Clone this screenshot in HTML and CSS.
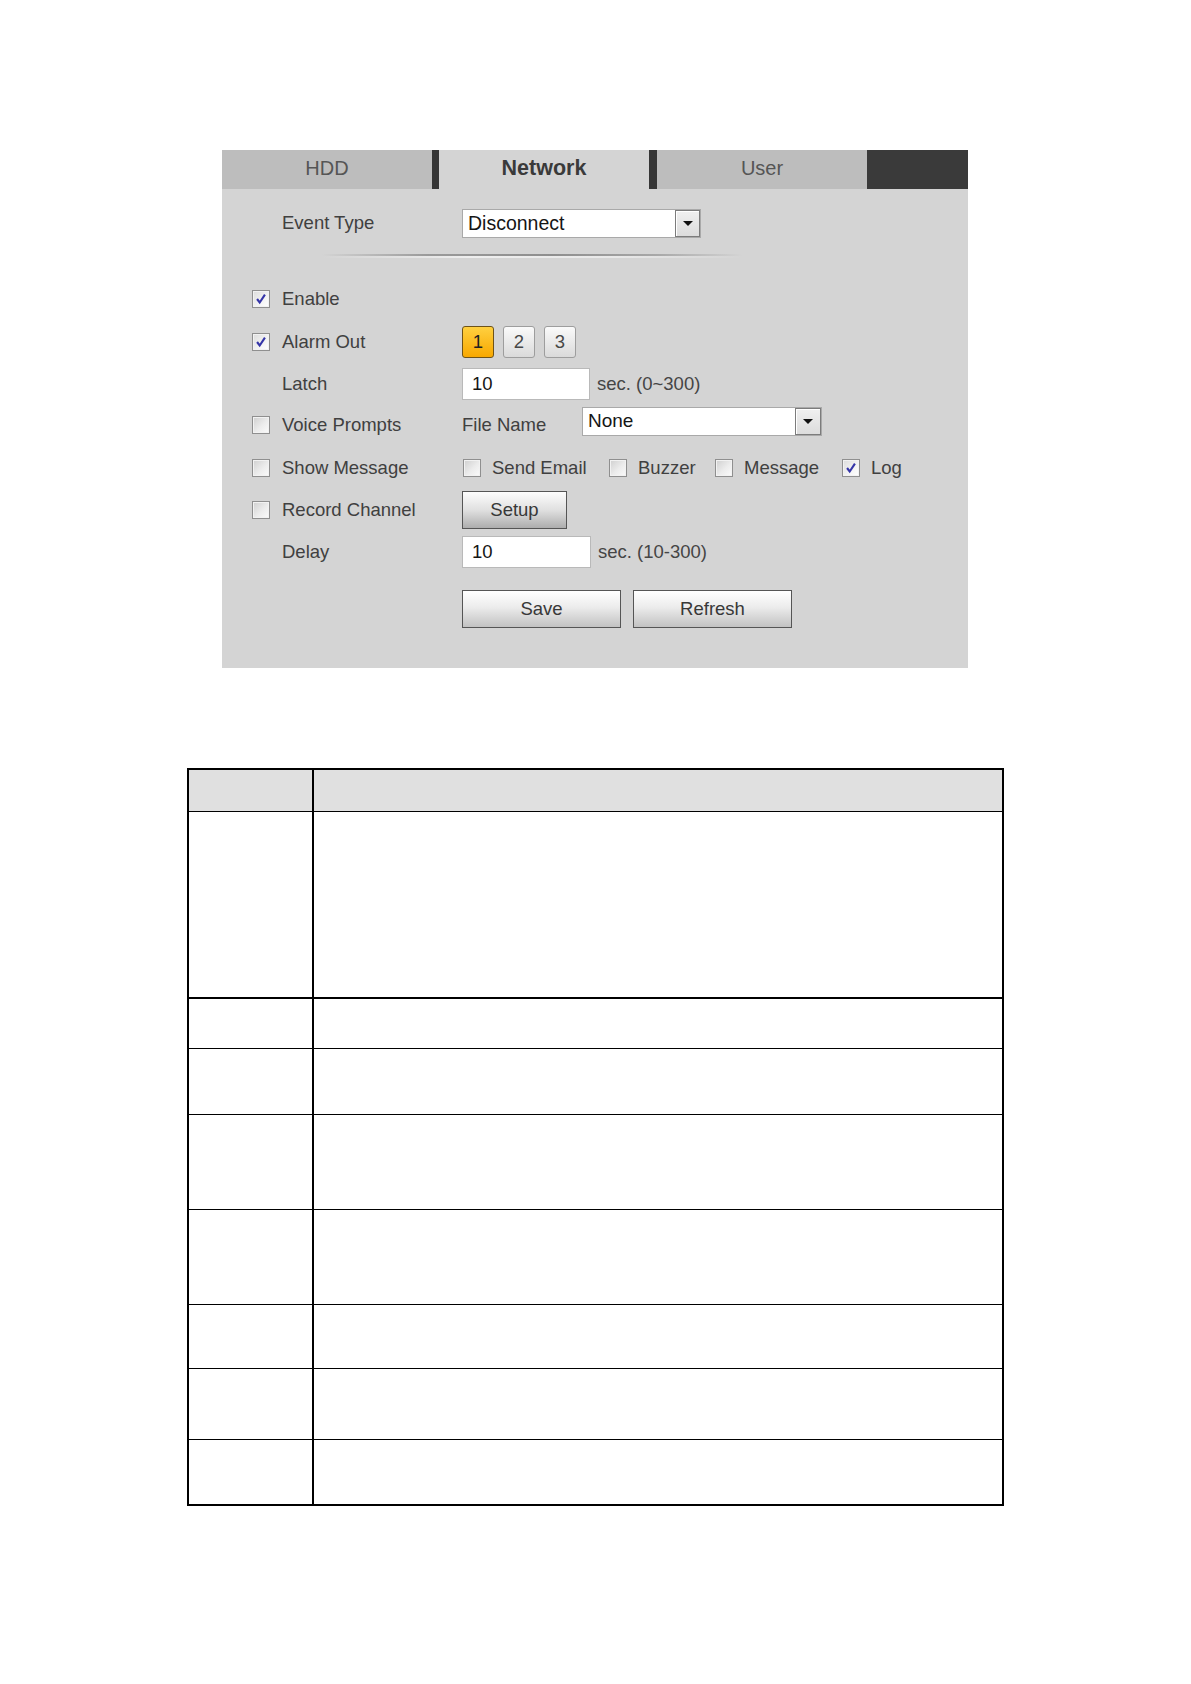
FILE: index.html
```html
<!DOCTYPE html>
<html>
<head>
<meta charset="utf-8">
<title>Network Event</title>
<link rel="stylesheet" href="styles.css">
</head>
<body>
<div class="page">
  <div class="panel">
    <div class="tabs">
      <div class="tab">HDD</div>
      <div class="tab active">Network</div>
      <div class="tab">User</div>
      <div class="tab-fill"></div>
    </div>
    <div class="body">
      <div class="row row-event">
        <div class="lead"><span class="cb-space"></span><span class="label">Event Type</span></div>
        <div class="select sel-event"><span class="sel-text">Disconnect</span><span class="sel-arrow"><span class="tri"></span></span></div>
      </div>
      <div class="sep"></div>

      <div class="row row-enable">
        <div class="lead"><span class="cb checked"><svg viewBox="0 0 16 16" width="14" height="14"><path d="M3.5 8 L6.5 12 L12.5 3" fill="none" stroke="#3535a8" stroke-width="2.4"/></svg></span><span class="label">Enable</span></div>
      </div>

      <div class="row row-alarm">
        <div class="lead"><span class="cb checked"><svg viewBox="0 0 16 16" width="14" height="14"><path d="M3.5 8 L6.5 12 L12.5 3" fill="none" stroke="#3535a8" stroke-width="2.4"/></svg></span><span class="label">Alarm Out</span></div>
        <div class="nums">
          <span class="num on">1</span>
          <span class="num">2</span>
          <span class="num">3</span>
        </div>
      </div>

      <div class="row row-latch">
        <div class="lead"><span class="cb-space"></span><span class="label">Latch</span></div>
        <div class="input">10</div>
        <span class="unit">sec. (0~300)</span>
      </div>

      <div class="row row-voice">
        <div class="lead"><span class="cb"></span><span class="label">Voice Prompts</span></div>
        <span class="label filename">File Name</span>
        <div class="select sel-file"><span class="sel-text">None</span><span class="sel-arrow"><span class="tri"></span></span></div>
      </div>

      <div class="row row-show">
        <div class="lead"><span class="cb"></span><span class="label">Show Message</span></div>
        <div class="opts">
          <span class="opt opt-email"><span class="cb"></span><span class="label">Send Email</span></span>
          <span class="opt opt-buzzer"><span class="cb"></span><span class="label">Buzzer</span></span>
          <span class="opt opt-message"><span class="cb"></span><span class="label">Message</span></span>
          <span class="opt"><span class="cb checked"><svg viewBox="0 0 16 16" width="14" height="14"><path d="M3.5 8 L6.5 12 L12.5 3" fill="none" stroke="#3535a8" stroke-width="2.4"/></svg></span><span class="label">Log</span></span>
        </div>
      </div>

      <div class="row row-record">
        <div class="lead"><span class="cb"></span><span class="label">Record Channel</span></div>
        <div class="btn btn-setup">Setup</div>
      </div>

      <div class="row row-delay">
        <div class="lead"><span class="cb-space"></span><span class="label">Delay</span></div>
        <div class="input input-delay">10</div>
        <span class="unit">sec. (10-300)</span>
      </div>

      <div class="row row-actions">
        <div class="lead"></div>
        <div class="btn btn-wide">Save</div>
        <div class="btn btn-wide">Refresh</div>
      </div>
    </div>
  </div>

  <table class="desc">
    <colgroup><col class="c1"><col class="c2"></colgroup>
    <tr class="h0"><th></th><th></th></tr>
    <tr class="h1 thick"><td></td><td></td></tr>
    <tr class="h2"><td></td><td></td></tr>
    <tr class="h3"><td></td><td></td></tr>
    <tr class="h4"><td></td><td></td></tr>
    <tr class="h5"><td></td><td></td></tr>
    <tr class="h6"><td></td><td></td></tr>
    <tr class="h7"><td></td><td></td></tr>
    <tr class="h8"><td></td><td></td></tr>
  </table>
</div>
</body>
</html>
```

FILE: styles.css
```css
* { box-sizing: border-box; }
html, body { margin: 0; padding: 0; background: #ffffff; }
body { font-family: "Liberation Sans", Arial, sans-serif; }

.page { padding-top: 150px; width: 1191px; }

.panel {
  margin-left: 222px;
  width: 746px;
  height: 518px;
  background: #d4d4d4;
}

.tabs { display: flex; height: 39px; }
.tab {
  width: 210px;
  background: #bdbdbd;
  color: #555555;
  font-size: 20px;
  display: flex;
  align-items: center;
  justify-content: center;
  padding-bottom: 3px;
}
.tab.active {
  width: 225px;
  background: #d4d4d4;
  color: #3a3a3a;
  font-weight: bold;
  font-size: 21.5px;
  border-left: 7px solid #363636;
  border-right: 8px solid #363636;
}
.tab-fill { flex: 1; background: #3a3a3a; }

.body { padding-left: 30px; }

.row { display: flex; align-items: center; }
.lead { width: 210px; display: flex; align-items: center; flex-shrink: 0; }
.cb-space { width: 18px; height: 18px; flex-shrink: 0; }
.label { color: #404040; font-size: 18.5px; line-height: 20px; white-space: nowrap; padding-bottom: 1px; }
.row-event .label { padding-bottom: 2px; }
.lead .label { margin-left: 12px; }

.cb {
  width: 18px; height: 18px; flex-shrink: 0;
  border: 1px solid #8f8f8f;
  background: linear-gradient(135deg, #cfcfcf 0%, #ececec 55%, #fbfbfb 100%);
  box-shadow: inset 0 0 0 1px #f2f2f2;
  display: flex; align-items: center; justify-content: center;
}
.cb.checked { background: linear-gradient(135deg, #dcdcdc 0%, #f4f4f4 60%, #ffffff 100%); }

.row-event { margin-top: 20px; height: 29px; }
.sep {
  margin-top: 16px;
  margin-left: 70px;
  width: 420px;
  height: 4px;
  background:
    linear-gradient(to right, rgba(150,150,150,0) 0%, #9a9a9a 25%, #8e8e8e 55%, #a8a8a8 80%, rgba(150,150,150,0) 100%) top / 100% 2px no-repeat,
    linear-gradient(to right, rgba(240,240,240,0) 0%, #eeeeee 35%, #e8e8e8 70%, rgba(240,240,240,0) 100%) bottom / 100% 2px no-repeat;
}

.select {
  display: flex;
  height: 29px;
  background: #ffffff;
  border: 1px solid #a9a9a9;
}
.sel-text { flex: 1; font-size: 19.5px; color: #151515; padding-left: 5px; line-height: 26px; }
.sel-arrow {
  width: 25px; height: 27px;
  border: 1px solid #7c7c7c;
  box-shadow: inset 1px 1px 0 #ffffff;
  background: linear-gradient(#f0f0f0, #dcdcdc);
  display: flex; align-items: center; justify-content: center;
}
.tri { width: 0; height: 0; border-left: 5px solid transparent; border-right: 5px solid transparent; border-top: 5px solid #111; }
.sel-event { width: 239px; }
.sel-file { width: 240px; align-self: flex-start; }
.sel-file .sel-text { padding-left: 5px; font-size: 19px; }
.sel-file .sel-arrow { width: 26px; }

.row-enable { margin-top: 25px; height: 32px; }
.row-alarm { margin-top: 11px; height: 32px; }
.row-latch { margin-top: 10px; height: 32px; }
.row-voice { margin-top: 7px; height: 36px; }
.row-show { margin-top: 10px; height: 30px; }
.row-record { margin-top: 8px; height: 38px; }
.row-delay { margin-top: 7px; height: 32px; }
.row-actions { margin-top: 22px; height: 38px; }

.nums { display: flex; gap: 9px; }
.num {
  width: 32px; height: 32px;
  border: 1px solid #9d9d9d;
  border-radius: 3px;
  background: linear-gradient(#fafafa, #dadada);
  color: #474747;
  font-size: 18.5px;
  display: flex; align-items: center; justify-content: center;
  padding-bottom: 1px;
}
.num.on {
  border-color: #6e5318;
  background: linear-gradient(#ffd040, #f8a800);
  color: #202020;
}

.input {
  width: 128px; height: 32px;
  background: #ffffff;
  border: 1px solid #b9b9b9;
  font-size: 18.5px;
  color: #151515;
  padding-left: 9px;
  line-height: 29px;
}
.input-delay { width: 129px; }
.unit { margin-left: 7px; font-size: 18.5px; color: #454545; padding-bottom: 1px; }

.filename { width: 120px; }

.opts { display: flex; align-items: center; }
.opt { display: flex; align-items: center; }
.opt .cb { margin-left: 1px; }
.opt .label { margin-left: 11px; }
.opt-email { width: 146px; }
.opt-buzzer { width: 106px; }
.opt-message { width: 127px; }

.btn {
  height: 38px;
  border: 1px solid #555555;
  background: linear-gradient(#ffffff 0%, #ececec 45%, #c2c2c2 100%);
  color: #383838;
  font-size: 18.5px;
  display: flex; align-items: center; justify-content: center;
  padding-bottom: 1px;
}
.btn-setup { width: 105px; background: linear-gradient(#fdfdfd 0%, #e0e0e0 50%, #adadad 100%); }
.btn-wide { width: 159px; }
.btn-wide + .btn-wide { margin-left: 12px; }

.desc {
  margin-top: 100px;
  margin-left: 187px;
  width: 817px;
  border-collapse: collapse;
  table-layout: fixed;
  border: 2px solid #000;
}
.desc col.c1 { width: 125px; }
.desc th, .desc td { border: 1px solid #000; padding: 0; }
.desc th:first-child, .desc td:first-child { border-right: 2px solid #000; }
.desc th { background: #e0e0e0; }
.desc tr.thick td { border-bottom: 2px solid #000; }
.desc .h0 { height: 42px; }
.desc .h1 { height: 187px; }
.desc .h2 { height: 50px; }
.desc .h3 { height: 66px; }
.desc .h4 { height: 95px; }
.desc .h5 { height: 95px; }
.desc .h6 { height: 64px; }
.desc .h7 { height: 71px; }
.desc .h8 { height: 66px; }
```
